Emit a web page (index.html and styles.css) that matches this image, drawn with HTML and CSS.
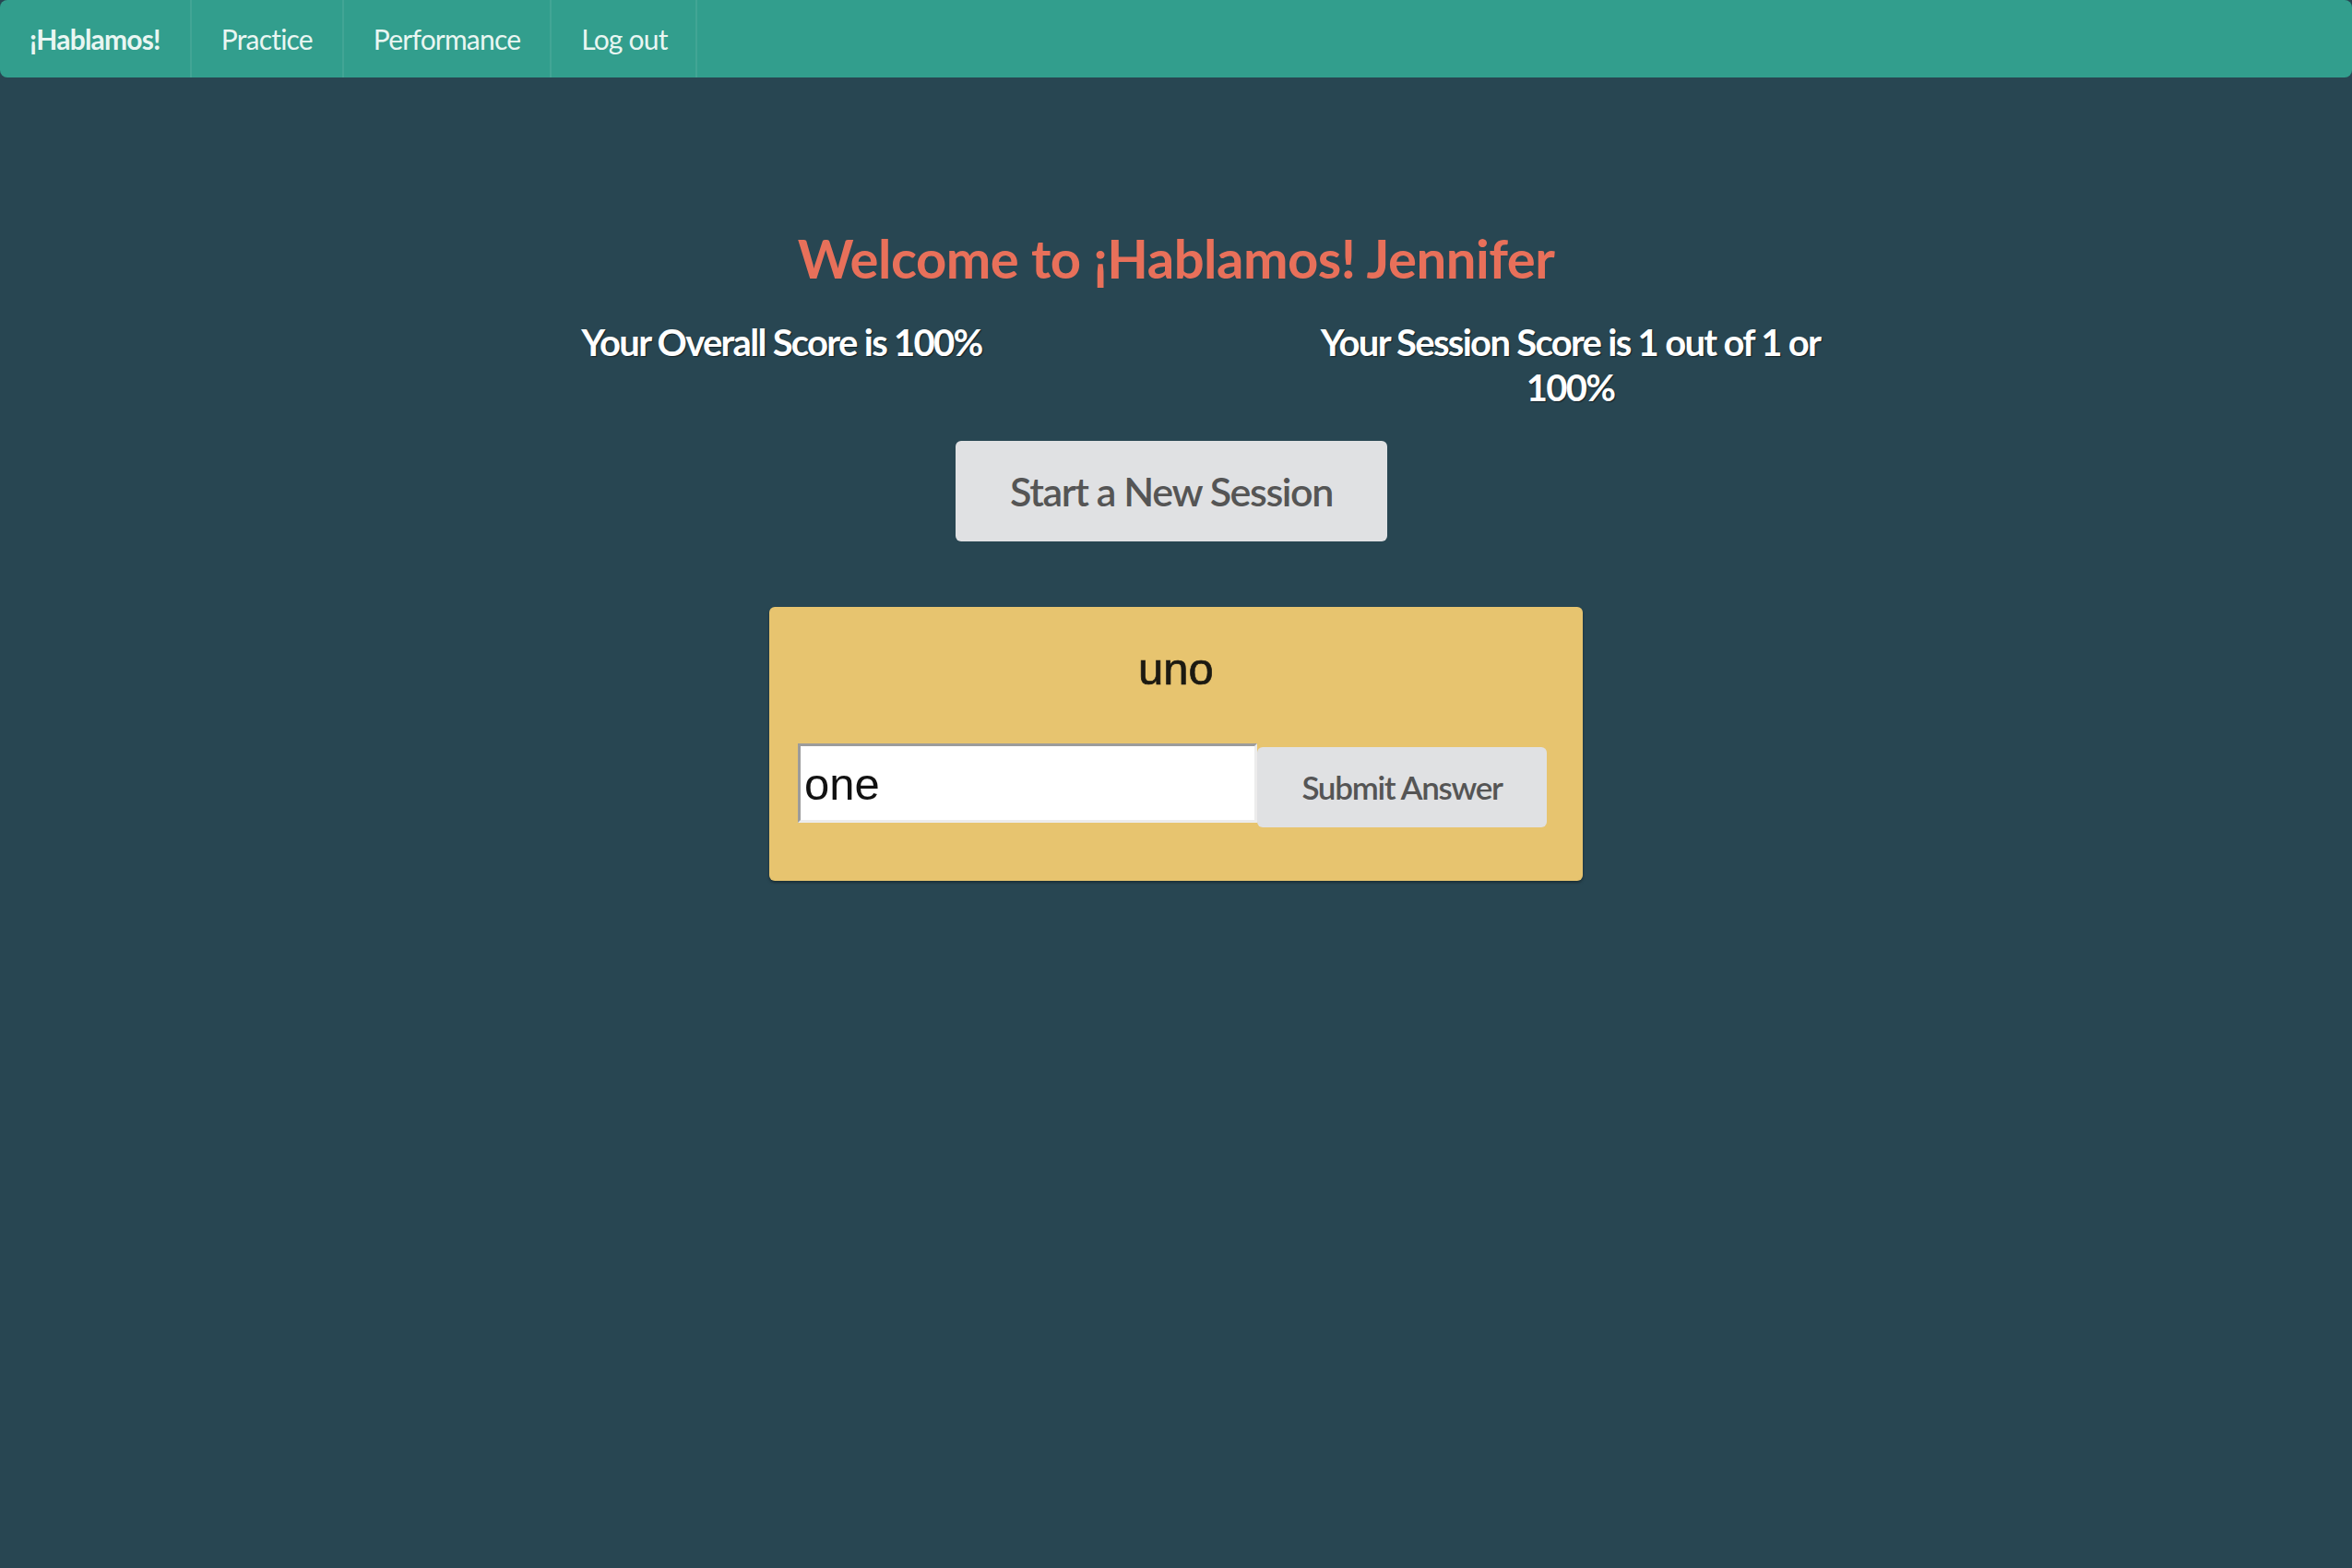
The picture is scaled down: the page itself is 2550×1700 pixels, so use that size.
FILE: index.html
```html
<!DOCTYPE html>
<html lang="en">
<head>
<meta charset="utf-8">
<title>¡Hablamos!</title>
<link rel="stylesheet" href="styles.css">
</head>
<body>
<nav class="navbar">
  <a class="nav-item brand" href="#">¡Hablamos!</a>
  <a class="nav-item" href="#">Practice</a>
  <a class="nav-item" href="#">Performance</a>
  <a class="nav-item" href="#">Log out</a>
</nav>
<main class="main">
  <h1 class="welcome">Welcome to ¡Hablamos! Jennifer</h1>
  <div class="scores">
    <div class="score">Your Overall Score is 100%</div>
    <div class="score">Your Session Score is 1 out of 1 or 100%</div>
  </div>
  <div class="start-wrap">
    <button class="btn btn-start" type="button">Start a New Session</button>
  </div>
  <section class="card">
    <div class="word">uno</div>
    <form class="answer-row">
      <input class="answer-input" type="text" value="one">
      <button class="btn btn-submit" type="button">Submit Answer</button>
    </form>
  </section>
</main>
</body>
</html>
```
FILE: styles.css
```css
html, body {
  margin: 0;
  padding: 0;
}
body {
  background: #284652;
  font-family: Lato, "Open Sans", sans-serif;
  min-height: 1700px;
}
.navbar {
  display: flex;
  height: 84px;
  background: #329e8d;
  border-radius: 8px;
}
.nav-item {
  display: block;
  padding: 0 32px;
  line-height: 84px;
  font-size: 30px;
  letter-spacing: -0.8px;
  color: #e9f6f2;
  text-decoration: none;
  border-right: 2px solid rgba(255, 255, 255, 0.08);
}
.nav-item:last-child {
  padding-right: 30px;
}
.brand {
  font-weight: 700;
}
.main {
  display: flex;
  flex-direction: column;
  align-items: center;
  padding-top: 164px;
}
.welcome {
  margin: 0;
  font-size: 58px;
  line-height: 64px;
  font-weight: 700;
  letter-spacing: -0.5px;
  color: #e8705a;
  text-align: center;
}
.scores {
  display: grid;
  grid-template-columns: 855px 855px;
  margin-top: 35px;
}
.score {
  padding: 0 140px;
  text-align: center;
  font-size: 40px;
  line-height: 49px;
  font-weight: 700;
  letter-spacing: -1.7px;
  color: #ffffff;
  text-shadow: 1px 1px 1px rgba(0, 0, 0, 0.55);
}
.start-wrap {
  margin-top: 33px;
  padding-right: 10px;
}
.btn {
  font-family: Lato, "Open Sans", sans-serif;
  background: #e0e1e3;
  color: #555555;
  border: none;
  border-radius: 6px;
  cursor: pointer;
}
.btn-start {
  width: 468px;
  height: 109px;
  font-size: 43px;
  font-weight: 600;
  letter-spacing: -1.4px;
  padding: 0;
}
.card {
  margin-top: 71px;
  width: 882px;
  box-sizing: border-box;
  padding: 40px 31px 58px;
  background: #e7c46f;
  border-radius: 6px;
  box-shadow: 0 2px 3px rgba(0, 0, 0, 0.35);
}
.word {
  text-align: center;
  font-family: "Liberation Sans", Arial, sans-serif;
  font-size: 49px;
  line-height: 54px;
  color: #1c1a12;
  -webkit-text-stroke: 0.7px #1c1a12;
  margin-bottom: 54px;
}
.answer-row {
  display: flex;
  align-items: baseline;
  margin: 0;
}
.answer-input {
  width: 498px;
  height: 86px;
  box-sizing: border-box;
  padding: 12px 4px 10px;
  margin: 0;
  font-family: "Liberation Sans", Arial, sans-serif;
  font-size: 49px;
  color: #111111;
  background: #ffffff;
  border-style: solid;
  border-width: 3px;
  border-color: #9c9c9c #ececec #ececec #9c9c9c;
  outline: none;
}
.btn-submit {
  width: 314px;
  height: 87px;
  font-size: 35px;
  font-weight: 600;
  letter-spacing: -1.3px;
  padding: 0;
}
```
